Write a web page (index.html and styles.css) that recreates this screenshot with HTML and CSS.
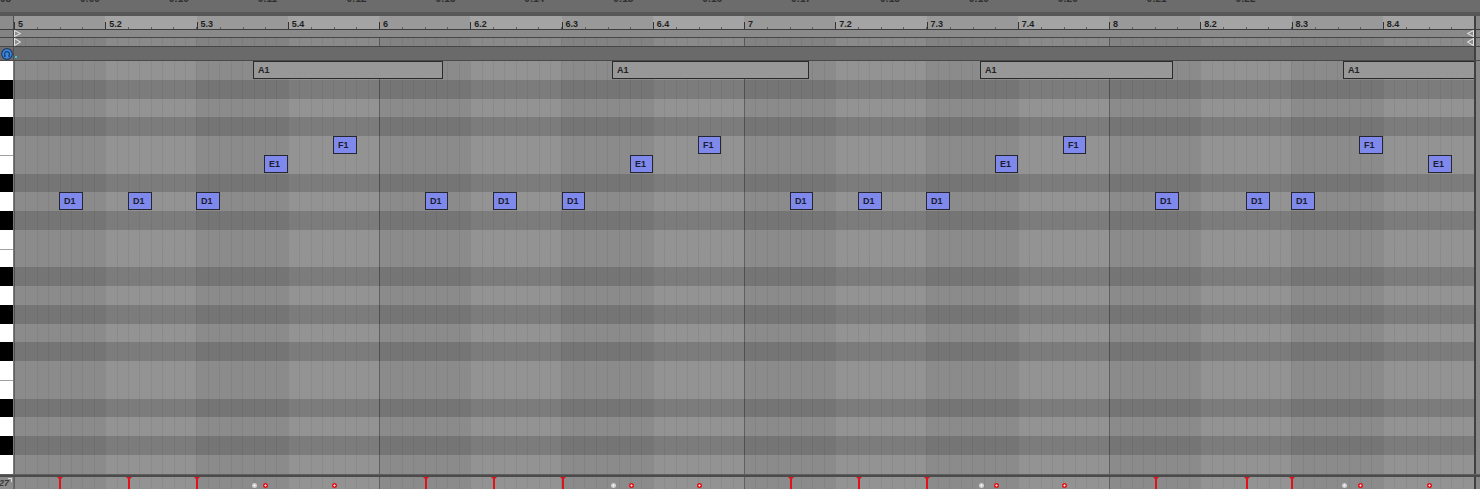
FILE: index.html
```html
<!DOCTYPE html>
<html lang="en">
<head>
    <meta charset="UTF-8">
    <title>MIDI Editor</title>
    <link rel="stylesheet" href="styles.css">
</head>
<body>
    <!-- Time ruler (seconds) -->
    <div class="timebar">
        <div class="times">
            <span>0:08</span><span>0:09</span><span>0:10</span><span>0:11</span><span>0:12</span>
            <span>0:13</span><span>0:14</span><span>0:15</span><span>0:16</span><span>0:17</span>
            <span>0:18</span><span>0:19</span><span>0:20</span><span>0:21</span><span>0:22</span>
        </div>
    </div>
    <div class="gap"></div>

    <!-- Beat ruler -->
    <div class="band ruler-band">
        <div class="side"></div>
        <div class="main ruler">
            <span>5</span><span>5.2</span><span>5.3</span><span>5.4</span>
            <span>6</span><span>6.2</span><span>6.3</span><span>6.4</span>
            <span>7</span><span>7.2</span><span>7.3</span><span>7.4</span>
            <span>8</span><span>8.2</span><span>8.3</span><span>8.4</span>
        </div>
        <div class="edge"></div>
    </div>

    <!-- Loop / start markers -->
    <div class="band loop-band">
        <div class="side"></div>
        <div class="main loop">
            <svg width="7" height="7" viewBox="0 0 7 7"><polygon points="0.5,0.5 6.5,3.5 0.5,6.5" /></svg>
            <svg width="7" height="7" viewBox="0 0 7 7"><polygon points="6.5,0.5 0.5,3.5 6.5,6.5" /></svg>
        </div>
        <div class="edge"></div>
    </div>
    <div class="band loop-band loop-band-2">
        <div class="side"></div>
        <div class="main loop lined">
            <svg width="7" height="8" viewBox="0 0 7 8"><polygon points="0.5,0.5 6.5,4 0.5,7.5" /></svg>
            <svg width="7" height="8" viewBox="0 0 7 8"><polygon points="6.5,0.5 0.5,4 6.5,7.5" /></svg>
        </div>
        <div class="edge"></div>
    </div>

    <!-- Preview strip -->
    <div class="band dark-band">
        <div class="side">
            <svg class="preview" width="12" height="12" viewBox="0 0 12 12">
                <circle cx="6" cy="6" r="5.3" fill="#3f88dc" stroke="#1b3d69" stroke-width="1.2" />
                <path d="M3.6 7.4 V6 a2.4 2.4 0 0 1 4.8 0 V7.4" fill="none" stroke="#16427a" stroke-width="1.2" />
                <rect x="3" y="6.6" width="1.6" height="2.4" rx="0.5" fill="#16427a" />
                <rect x="7.4" y="6.6" width="1.6" height="2.4" rx="0.5" fill="#16427a" />
            </svg>
        </div>
        <div class="main dark"><i class="cue"></i></div>
        <div class="edge"></div>
    </div>

    <!-- Piano roll -->
    <div class="band grid-band">
        <div class="keys">
            <div class="key"></div>
            <div class="key black"></div>
            <div class="key"></div>
            <div class="key black"></div>
            <div class="key"></div>
            <div class="key cut"></div>
            <div class="key black"></div>
            <div class="key"></div>
            <div class="key black"></div>
            <div class="key"></div>
            <div class="key cut"></div>
            <div class="key black"></div>
            <div class="key"></div>
            <div class="key black"></div>
            <div class="key"></div>
            <div class="key black"></div>
            <div class="key"></div>
            <div class="key cut"></div>
            <div class="key black"></div>
            <div class="key"></div>
            <div class="key black"></div>
            <div class="key"></div>
        </div>
        <div class="main grid" id="grid">
            <div class="row"></div>
            <div class="row black"></div>
            <div class="row"></div>
            <div class="row black"></div>
            <div class="row"></div>
            <div class="row"></div>
            <div class="row black"></div>
            <div class="row"></div>
            <div class="row black"></div>
            <div class="row"></div>
            <div class="row"></div>
            <div class="row black"></div>
            <div class="row"></div>
            <div class="row black"></div>
            <div class="row"></div>
            <div class="row black"></div>
            <div class="row"></div>
            <div class="row"></div>
            <div class="row black"></div>
            <div class="row"></div>
            <div class="row black"></div>
            <div class="row"></div>
        </div>
        <div class="edge"></div>
    </div>

    <!-- Velocity lane -->
    <div class="vsep"></div>
    <div class="band vel-band">
        <div class="side vel-side"><span>127</span></div>
        <div class="main vel" id="vel"></div>
        <div class="edge"></div>
    </div>

    <script>
        // note name, row (from A1 down), start x, end x  (page pixels)
        const ROW = 18.75;
        const LEFT = 14;
        const notes = [
            ['A1', 0, 253, 442], ['A1', 0, 612, 808], ['A1', 0, 980, 1172], ['A1', 0, 1343, 1490],
            ['F1', 4, 333, 356], ['F1', 4, 698, 720], ['F1', 4, 1063, 1085], ['F1', 4, 1359, 1382],
            ['E1', 5, 264, 287], ['E1', 5, 630, 652], ['E1', 5, 995, 1017], ['E1', 5, 1428, 1451],
            ['D1', 7, 59, 82], ['D1', 7, 128, 151], ['D1', 7, 196, 219], ['D1', 7, 425, 447],
            ['D1', 7, 493, 516], ['D1', 7, 562, 584], ['D1', 7, 790, 812], ['D1', 7, 858, 881],
            ['D1', 7, 926, 949], ['D1', 7, 1155, 1178], ['D1', 7, 1246, 1269], ['D1', 7, 1291, 1314]
        ];

        const grid = document.getElementById('grid');
        const vel = document.getElementById('vel');

        notes.forEach(([name, row, x1, x2]) => {
            const note = document.createElement('div');
            note.className = name === 'A1' ? 'note muted' : 'note';
            note.style.left = (x1 - LEFT) + 'px';
            note.style.top = (row * ROW) + 'px';
            note.style.width = (x2 - x1 + 1) + 'px';
            note.textContent = name;
            grid.appendChild(note);

            // velocity marker
            const mark = document.createElement('span');
            if (name === 'D1') mark.className = 'stem';
            else if (name === 'A1') mark.className = 'pin off';
            else mark.className = 'pin';
            mark.style.left = (x1 - LEFT) + 'px';
            vel.appendChild(mark);
        });
    </script>
</body>
</html>
```

FILE: styles.css
```css
body {
    margin: 0;
    width: 1480px;
    height: 489px;
    overflow: hidden;
    background-color: #8a8a8a;
    font-family: "Liberation Sans", Arial, sans-serif;
    --lines:
        repeating-linear-gradient(90deg, rgba(0, 0, 0, 0.28) 0 1px, transparent 1px 365px),
        repeating-linear-gradient(90deg, rgba(0, 0, 0, 0.06) 0 1px, transparent 1px 11.40625px),
        repeating-linear-gradient(90deg, rgba(0, 0, 0, 0.055) 0 91.25px, transparent 91.25px 182.5px);
}

/* time ruler */
.timebar {
    height: 12px;
    background-color: #6c6c6c;
    overflow: hidden;
}
.times {
    display: flex;
    margin-left: -9px;
    margin-top: -6px;
}
.times span {
    flex: 0 0 88.9px;
    font-size: 10px;
    font-weight: bold;
    line-height: 10px;
    color: #2f2f2f;
}
.gap {
    height: 4px;
    background-color: #575757;
}

/* generic band: keys column | lane | right frame */
.band {
    display: flex;
}
.side {
    width: 13px;
    flex: none;
    border-right: 1px solid #4e4e4e;
    background-color: #838383;
}
.main {
    width: 1460px;
    flex: none;
    position: relative;
    overflow: hidden;
}
.edge {
    flex: 1;
    border-left: 2px solid #404040;
    background-color: #878787;
}

/* beat ruler */
.ruler-band {
    height: 13px;
    border-bottom: 1px solid #3d3d3d;
}
.ruler-band .side {
    background-color: #8c8c8c;
}
.ruler {
    display: flex;
}
.ruler span {
    flex: 0 0 91.25px;
    box-sizing: border-box;
    padding: 3px 0 0 4px;
    font-size: 9px;
    font-weight: bold;
    line-height: 10px;
    color: #1f1f1f;
    background-color: #999;
    background-image:
        linear-gradient(#333, #333),
        repeating-linear-gradient(90deg, #5c5c5c 0 1px, transparent 1px 22.8125px);
    background-size: 1px 7px, 100% 2px;
    background-position: 0 100%, 0 100%;
    background-repeat: no-repeat;
}
.ruler span:nth-child(even) {
    background-color: #a4a4a4;
}

/* loop markers */
.loop-band {
    height: 7px;
    border-bottom: 1px solid #474747;
}
.loop-band-2 {
    height: 8px;
}
.loop {
    display: flex;
    justify-content: space-between;
    align-items: center;
    background-color: #8a8a8a;
}
.loop svg {
    display: block;
}
.loop polygon {
    fill: #8a8a8a;
    stroke: #e0e0e0;
    stroke-width: 1.1;
}
.lined {
    background-image: var(--lines);
}

/* preview strip */
.dark-band {
    height: 13px;
    border-bottom: 1px solid #4a4a4a;
}
.dark-band .side {
    background-color: #6e6e6e;
    display: flex;
    align-items: flex-end;
}
.preview {
    display: block;
    margin: 0 0 0 1px;
}
.dark {
    background-color: #6a6a6a;
    display: flex;
    align-items: flex-end;
}
.cue {
    width: 2px;
    height: 2px;
    margin: 0 0 2px 1px;
    background-color: #35c7e8;
}

/* piano roll */
.grid-band {
    height: 412.5px;
}
.keys {
    width: 13px;
    flex: none;
    border-right: 1px solid #7a7a7a;
    display: flex;
    flex-direction: column;
}
.key {
    height: 18.75px;
    flex: none;
    box-sizing: border-box;
    background-color: #fff;
}
.key.black {
    background-color: #000;
}
.key.cut {
    border-top: 1px solid #a0a0a0;
}
.grid {
    display: flex;
    flex-direction: column;
}
.row {
    height: 18.75px;
    flex: none;
    background-color: #939393;
    background-image: var(--lines);
}
.row.black {
    background-color: #7c7c7c;
}
.note {
    position: absolute;
    height: 18px;
    box-sizing: border-box;
    padding-left: 4px;
    border: 1px solid #262630;
    background-color: #7f89ec;
    font-size: 9px;
    font-weight: bold;
    line-height: 16px;
    color: #1b1b2e;
}
.note.muted {
    background-color: #989898;
    border: 1.5px solid #2a2a2a;
    color: #222;
}

/* velocity lane */
.vsep {
    height: 3.5px;
    background-color: #4b4b4b;
    border-top: 0.5px solid #5e5e5e;
    box-sizing: border-box;
}
.vel-band {
    height: 12.5px;
}
.vel-side {
    position: relative;
    display: flex;
    justify-content: flex-end;
    overflow: hidden;
    background-color: #8c8c8c;
    border-right: 1px solid #6c6c6c;
}
.vel-side span {
    padding-right: 4px;
    font-size: 9px;
    font-style: italic;
    font-weight: bold;
    line-height: 12px;
    color: #3a3a3a;
}
.vel-side::after {
    content: "";
    position: absolute;
    top: 1px;
    right: 1px;
    width: 3px;
    height: 3px;
    border-top: 1px solid #dcdcdc;
    border-right: 1px solid #dcdcdc;
}
.vel {
    background-color: #939393;
    background-image: var(--lines);
}
.stem {
    position: absolute;
    top: 0;
    bottom: 0;
    width: 2px;
    background-color: #e2121b;
}
.stem::before {
    content: "";
    position: absolute;
    top: 0;
    left: -2px;
    width: 0;
    height: 0;
    border-left: 3px solid transparent;
    border-right: 3px solid transparent;
    border-top: 3px solid #e2121b;
}
.pin {
    position: absolute;
    top: 5.5px;
    width: 5px;
    height: 5px;
    margin-left: -1.5px;
    border-radius: 50%;
    background: radial-gradient(circle, #ffd6d6 0 0.8px, #e2121b 1.3px);
}
.pin.off {
    background: radial-gradient(circle, #f2f2f2 0 0.8px, #cdcdcd 1.3px);
}
```
